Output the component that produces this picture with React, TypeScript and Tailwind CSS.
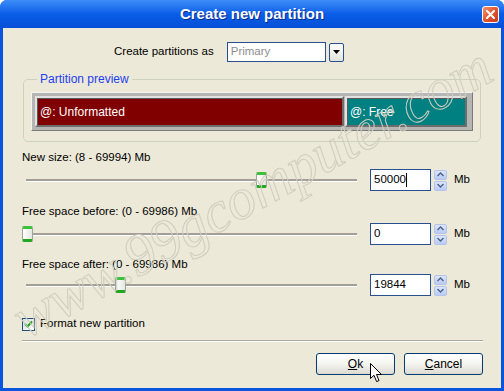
import React from 'react';

function SpinArrow({ up }: { up?: boolean }) {
  return (
    <div className="flex h-[10px] w-[13px] items-center justify-center rounded-[2px] border border-[#b3c3ea] bg-gradient-to-b from-[#dbe6fd] to-[#b9cbf5]">
      <svg width="7" height="5" viewBox="0 0 7 5">
        <path
          d={up ? 'M0.5 4 L3.5 1 L6.5 4' : 'M0.5 1 L3.5 4 L6.5 1'}
          fill="none"
          stroke="#4d6185"
          strokeWidth="1.4"
        />
      </svg>
    </div>
  );
}

function Slider({ thumb }: { thumb: number }) {
  return (
    <div className="relative flex h-[22px] w-[339px] items-center px-[4px]">
      <div className="h-[3px] w-full border-b border-white bg-[#a19f97]" />
      <div
        className="absolute top-[3px] h-[16px] w-[11px] rounded-[2px] border-x border-x-[#9aa69a] border-t-[3px] border-t-[#3dc13d] border-b-[3px] border-b-[#22a722] bg-gradient-to-r from-white to-[#e6e6e0]"
        style={{ left: thumb }}
      />
    </div>
  );
}

function SizeRow({ label, value, thumb, caret, gap = 5 }: { label: string; value: string; thumb: number; caret?: boolean; gap?: number }) {
  return (
    <div>
      <div className="h-[14px] leading-[14px]">{label}</div>
      <div className={`flex h-[22px] items-center ${gap === 5 ? 'mt-[5px]' : 'mt-[3px]'}`}>
        <Slider thumb={thumb} />
        <div className="ml-[9px] flex h-[22px] w-[61px] items-center border border-[#2a4f8f] bg-white pl-[3px]">
          {value}
          {caret && <span className="h-[14px] w-px bg-black" />}
        </div>
        <div className="ml-[3px] flex flex-col gap-[1px]">
          <SpinArrow up />
          <SpinArrow />
        </div>
        <span className="ml-[7px]">Mb</span>
      </div>
    </div>
  );
}

export default function App() {
  return (
    <div className="relative flex h-[391px] w-[504px] flex-col overflow-hidden rounded-t-[7px] bg-[#0a54df] font-['Liberation_Sans',Arial,sans-serif] text-[11.5px] text-black">
      {/* Title bar */}
      <div className="relative flex h-[28px] items-center justify-center bg-gradient-to-b from-[#3d8cf8] via-[#0a5de8] to-[#0650d6]">
        <span className="text-[15px] font-bold text-white [text-shadow:1px_1px_#0b2a8c]">Create new partition</span>
        <div className="absolute right-[5px] top-[6px] flex h-[17px] w-[17px] items-center justify-center rounded-[3px] border border-white bg-gradient-to-br from-[#f0926e] via-[#e2552f] to-[#c7391c]">
          <svg width="9" height="9" viewBox="0 0 9 9">
            <path d="M1 1 L8 8 M8 1 L1 8" stroke="white" strokeWidth="2" strokeLinecap="round" />
          </svg>
        </div>
      </div>

      {/* Body */}
      <div className="mx-[3px] mb-[3px] flex-1 bg-[#ece9d8] pl-[19px] pr-[18px] pt-[14px]">
        <div className="flex h-[20px] items-center pl-[92px]">
          <span>Create partitions as</span>
          <div className="ml-[13px] flex h-[20px] w-[99px] items-center border border-[#2a4f8f] bg-white pl-[3px] text-[#8d8d8d]">
            Primary
          </div>
          <div className="ml-[3px] flex h-[19px] w-[15px] items-center justify-center rounded-[2px] border border-[#2a4f8f] bg-gradient-to-b from-white to-[#e3e3dc]">
            <svg width="7" height="4" viewBox="0 0 7 4">
              <path d="M0 0 L7 0 L3.5 4 Z" fill="black" />
            </svg>
          </div>
        </div>

        <fieldset className="ml-[1px] mr-[2px] mt-[10px] rounded-[5px] border border-[#d0d0bf] px-[7px] pb-[10px] pt-[6px]">
          <legend className="ml-[6px] px-[3px] text-[12px] leading-[14px] text-[#1f3ef0]">Partition preview</legend>
          <div className="flex border border-b-[#7a7a7a] border-l-[#f4f4f4] border-r-[#7a7a7a] border-t-[#f4f4f4] bg-[#b5b5b3] p-[3px]">
            <div className="w-[309px] border-2 border-b-[#6d6d6d] border-l-[#e2e2e2] border-r-[#6d6d6d] border-t-[#e2e2e2]">
              <div className="flex h-[27px] items-center border-l border-t border-[#5a5a5a] bg-[#800000] pl-[2px] text-[12px] text-white">
                @:&nbsp;Unformatted
              </div>
            </div>
            <div className="ml-[1px] mr-[2px] flex-1 border-2 border-b-[#6d6d6d] border-l-[#e2e2e2] border-r-[#6d6d6d] border-t-[#e2e2e2]">
              <div className="flex h-[27px] items-center border-l border-t border-[#5a5a5a] bg-[#008080] pl-[2px] text-[12px] text-white">
                @:&nbsp;Free
              </div>
            </div>
          </div>
        </fieldset>

        <div className="mt-[8px]">
          <SizeRow label="New size: (8 - 69994) Mb" value="50000" thumb={234} caret />
        </div>
        <div className="mt-[13px]">
          <SizeRow label="Free space before: (0 - 69986) Mb" value="0" thumb={0} />
        </div>
        <div className="mt-[12px]">
          <SizeRow label="Free space after: (0 - 69986) Mb" value="19844" thumb={93} gap={3} />
        </div>

        <div className="mt-[21px] flex h-[14px] items-center">
          <div className="flex h-[13px] w-[13px] items-center justify-center border border-[#1c5180] bg-gradient-to-br from-[#dcdcd6] to-white">
            <svg width="9" height="8" viewBox="0 0 9 8">
              <path d="M1 4 L3.5 6.5 L8 1.5" fill="none" stroke="#21a121" strokeWidth="2" />
            </svg>
          </div>
          <span className="ml-[5px]">Format new partition</span>
        </div>

        <div className="mt-[9px] h-[2px] border-b border-white bg-[#aca899]" />

        <div className="mt-[11px] flex justify-end gap-[9px]">
          <button className="flex h-[22px] w-[79px] items-center justify-center rounded-[3px] border border-[#003c74] bg-gradient-to-b from-white via-[#f4f4f0] to-[#dcdad0] text-[12px]">
            <span><span className="underline">O</span>k</span>
          </button>
          <button className="flex h-[22px] w-[79px] items-center justify-center rounded-[3px] border border-[#003c74] bg-gradient-to-b from-white via-[#f4f4f0] to-[#dcdad0] text-[12px]">
            <span><span className="underline">C</span>ancel</span>
          </button>
        </div>
      </div>

      {/* Watermark */}
      <div className="pointer-events-none absolute left-[252px] top-[192px] -translate-x-1/2 -translate-y-1/2 -rotate-[29deg] whitespace-nowrap font-['Liberation_Serif',serif] text-[58px] italic text-transparent [-webkit-text-stroke:1px_#d0ccbe]">
        www.99gcomputer.com
      </div>

      {/* Mouse cursor */}
      <svg className="pointer-events-none absolute left-[370px] top-[363px]" width="13" height="20" viewBox="0 0 13 20">
        <path d="M0.5 0.5 L0.5 15.5 L4 12.3 L6.6 18.6 L9 17.6 L6.5 11.5 L11.5 11.5 Z" fill="white" stroke="black" strokeWidth="1" />
      </svg>
    </div>
  );
}
